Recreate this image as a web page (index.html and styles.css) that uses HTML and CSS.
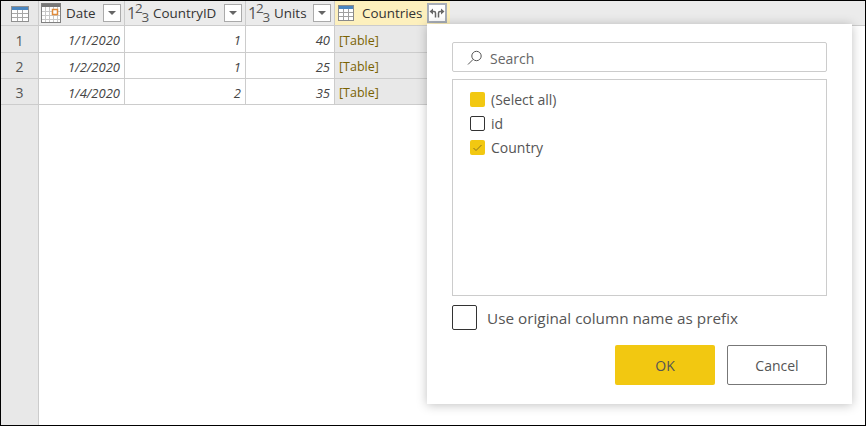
FILE: index.html
```html
<!DOCTYPE html>
<html lang="en">

<head>
    <meta charset="UTF-8">
    <title>Expand Countries column</title>
    <link rel="stylesheet" href="styles.css">
</head>

<body>

    <div class="frame">
        <div class="grid">
            <!-- header row -->
            <div class="corner">
                <svg width="18" height="16" viewBox="0 0 18 16"><rect x="0.5" y="0.5" width="17" height="15" fill="#fff" stroke="#909090"/><rect x="1" y="1" width="16" height="3" fill="#4a86c0"/><path d="M1 7.500h16M1 11.500h16M6.500 4v11M11.500 4v11" stroke="#a8a8a8" fill="none"/></svg>
            </div>
            <div class="head date">
                <svg class="type" width="20" height="20" viewBox="0 0 20 20"><rect x="0.5" y="0.5" width="19" height="19" fill="#fff" stroke="#808080"/><rect x="1" y="1" width="18" height="3" fill="#777"/><path d="M1 8.500h18M1 12.500h18M1 16.500h18M4.500 4v15M8.500 4v15M12.500 4v15M16.500 4v15" stroke="#c8c8c8" fill="none"/><rect x="11.500" y="6.500" width="5" height="5" fill="#fff" stroke="#e08a3a" stroke-width="1.500"/></svg>
                <span class="name">Date</span>
                <span class="drop"><i></i></span>
            </div>
            <div class="head country">
                <span class="num">1<sup>2</sup><sub>3</sub></span>
                <span class="name">CountryID</span>
                <span class="drop"><i></i></span>
            </div>
            <div class="head units">
                <span class="num">1<sup>2</sup><sub>3</sub></span>
                <span class="name">Units</span>
                <span class="drop"><i></i></span>
            </div>
            <div class="head table-head">
                <svg class="type" width="16" height="16" viewBox="0 0 16 16"><rect x="0.5" y="0.5" width="15" height="15" fill="#fff" stroke="#8a8a8a"/><rect x="1" y="1" width="14" height="3" fill="#4a86c0"/><path d="M1 7.500h14M1 11.500h14M5.500 4v11M10.500 4v11" stroke="#a0a0a0" fill="none"/></svg>
                <span class="name">Countries</span>
                <span class="expand">
                    <svg width="16" height="12" viewBox="0 0 16 12"><path d="M0.500 4.500L4 1.500v6zM12 1.500l3.500 3-3.500 3z" fill="#666"/><path d="M6.500 10.500V6a1.500 1.500 0 0 0-1.500-1.500H3.500M9.500 10.500V6a1.500 1.500 0 0 1 1.500-1.500h1.500" fill="none" stroke="#666" stroke-width="1.500"/></svg>
                </span>
            </div>
            <div class="head rest"></div>

            <!-- rows -->
            <div class="idx">1</div><div class="cell">1/1/2020</div><div class="cell">1</div><div class="cell">40</div><div class="cell link">[Table]</div><div class="blank"></div>
            <div class="idx">2</div><div class="cell">1/2/2020</div><div class="cell">1</div><div class="cell">25</div><div class="cell link">[Table]</div><div class="blank"></div>
            <div class="idx">3</div><div class="cell">1/4/2020</div><div class="cell">2</div><div class="cell">35</div><div class="cell link">[Table]</div><div class="blank"></div>

            <div class="idx fill"></div>
        </div>

        <!-- expand popup -->
        <div class="popup">
            <div class="search">
                <svg width="18" height="18" viewBox="0 0 18 18"><circle cx="10.500" cy="7" r="4.700" fill="none" stroke="#555"/><path d="M7 10.500L2 15.500" stroke="#555" fill="none"/></svg>
                <span>Search</span>
            </div>
            <div class="list">
                <div class="item"><span class="box on"></span>(Select all)</div>
                <div class="item"><span class="box"></span>id</div>
                <div class="item">
                    <span class="box on"><svg width="15" height="15" viewBox="0 0 15 15"><path d="M3.500 8l2.500 2.500 5.500-5.500" fill="none" stroke="#8a7320"/></svg></span>Country
                </div>
            </div>
            <div class="prefix"><span class="box big"></span>Use original column name as prefix</div>
            <div class="buttons">
                <button type="button" class="ok">OK</button>
                <button type="button" class="cancel">Cancel</button>
            </div>
        </div>
    </div>

</body>
</html>
```

FILE: styles.css
```css
html, body {
    margin: 0;
    padding: 0;
}

body {
    font-family: "Open Sans", "Noto Sans", sans-serif;
    font-size: 13px;
    color: #444;
    background: #fff;
}

.frame {
    position: relative;
    box-sizing: border-box;
    width: 866px;
    height: 426px;
    border: 1px solid #000;
    overflow: hidden;
}

.grid {
    display: grid;
    grid-template-columns: 38px 86px 121px 89px 115px 1fr;
    grid-template-rows: 25px 27px 26px 26px 1fr;
    height: 100%;
}

.corner {
    display: flex;
    align-items: center;
    justify-content: center;
    padding-top: 2px;
    background: #e8e8e8;
    border-right: 1px solid #ccc;
    border-bottom: 1px solid #ccc;
}

.head {
    display: flex;
    align-items: center;
    gap: 5px;
    padding: 0 3px 0 2px;
    background: #ebebeb;
    border-right: 1px solid #ccc;
    border-bottom: 1px solid #ccc;
    color: #333;
    font-size: 13.4px;
}

.head .name {
    flex: 1;
    white-space: nowrap;
}

.head .type {
    flex: none;
}

.head.rest {
    border-right: none;
}

.table-head {
    padding-left: 3px;
    background: #fdf0bd;
    border-right: none;
}

.table-head .type {
    margin-right: 3px;
}

.num {
    flex: none;
    color: #555;
    font-size: 16px;
    line-height: 1;
    white-space: nowrap;
    letter-spacing: -1.2px;
}

.num sup, .num sub {
    font-size: 13.5px;
    line-height: 0;
}

.num sup {
    vertical-align: 6px;
}

.num sub {
    vertical-align: -3px;
}

.drop {
    display: flex;
    align-items: center;
    justify-content: center;
    flex: none;
    width: 18px;
    height: 18px;
    box-sizing: border-box;
    background: #fff;
    border: 1px solid #aaa;
}

.drop i {
    border: 4px solid transparent;
    border-top: 4px solid #666;
    margin-top: 4px;
}

.expand {
    display: flex;
    align-items: center;
    justify-content: center;
    flex: none;
    width: 20px;
    height: 20px;
    box-sizing: border-box;
    background: #fff;
    border: 2px solid #a8aeb8;
}

.idx {
    display: flex;
    align-items: center;
    justify-content: center;
    padding-top: 2px;
    box-sizing: border-box;
    background: #e8e8e8;
    border-right: 1px solid #ccc;
    border-bottom: 1px solid #ccc;
    font-size: 14px;
    color: #555;
}

.idx.fill {
    border-bottom: none;
}

.cell {
    display: flex;
    align-items: center;
    justify-content: flex-end;
    padding: 2px 4px 0;
    border-right: 1px solid #ccc;
    border-bottom: 1px solid #ccc;
    font-style: italic;
    color: #444;
}

.cell.link {
    justify-content: flex-start;
    background: #e8e8e8;
    color: #7a6200;
    font-style: normal;
    font-size: 12.5px;
}

.popup {
    position: absolute;
    left: 426px;
    top: 23px;
    box-sizing: border-box;
    width: 425px;
    height: 380px;
    padding: 18px 25px 19px;
    background: #fff;
    box-shadow: 0 1px 10px rgba(0, 0, 0, 0.25);
    display: flex;
    flex-direction: column;
}

.search {
    display: flex;
    align-items: center;
    gap: 6px;
    flex: none;
    height: 30px;
    box-sizing: border-box;
    padding: 2px 0 0 13px;
    border: 1px solid #ccc;
    border-radius: 2px;
    font-size: 14px;
    color: #666;
}

.list {
    flex: none;
    height: 217px;
    box-sizing: border-box;
    margin-top: 7px;
    padding: 7px 17px;
    border: 1px solid #ccc;
}

.item {
    display: flex;
    align-items: center;
    gap: 6px;
    height: 24px;
    font-size: 14px;
    color: #555;
}

.box {
    display: flex;
    flex: none;
    width: 15px;
    height: 15px;
    box-sizing: border-box;
    border: 1px solid #333;
    border-radius: 2px;
}

.box.on {
    background: #f2c811;
    border: none;
}

.box.big {
    width: 25px;
    height: 25px;
}

.prefix {
    display: flex;
    align-items: center;
    gap: 10px;
    flex: none;
    margin-top: 9px;
    font-size: 15.3px;
    color: #555;
}

.buttons {
    display: flex;
    justify-content: flex-end;
    gap: 12px;
    flex: none;
    margin-top: 15px;
}

button {
    width: 100px;
    height: 40px;
    font-family: inherit;
    font-size: 14px;
    color: #555;
    border-radius: 2px;
    cursor: pointer;
}

.ok {
    background: #f2c811;
    border: none;
}

.cancel {
    background: #fff;
    border: 1px solid #777;
}
```
